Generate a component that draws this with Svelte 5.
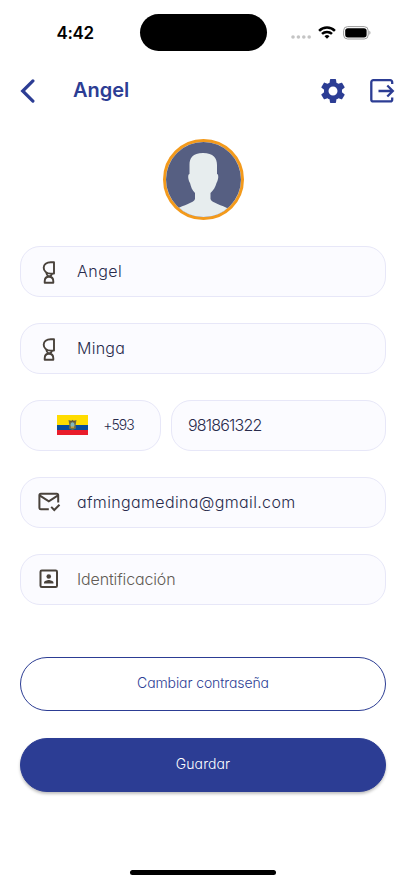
<script>
  let name = 'Angel';

  const people = [
    { value: 'Angel', width: 'first' },
    { value: 'Minga', width: 'last' }
  ];
</script>

<main class="screen">
  <div class="status-bar">
    <span class="time">4:42</span>
    <div class="island"></div>
    <div class="indicators">
      <svg width="20" height="4" viewBox="0 0 20 4" fill="#c4c4c4">
        <circle cx="2" cy="2" r="1.8" />
        <circle cx="7.4" cy="2" r="1.8" />
        <circle cx="12.8" cy="2" r="1.8" />
        <circle cx="18.2" cy="2" r="1.8" />
      </svg>
      <svg class="wifi" width="18" height="13" viewBox="0 0 18 13" fill="none" stroke="#000" stroke-width="2.5">
        <path d="M1.1 4.8a11.2 11.2 0 0 1 15.8 0" />
        <path d="M4 7.9a7.2 7.2 0 0 1 10 0" />
        <path d="M6.5 10.2a3.7 3.7 0 0 1 5 0L9 12.8z" fill="#000" stroke="none" />
      </svg>
      <svg class="battery" width="28" height="14" viewBox="0 0 28 14">
        <rect x=".6" y=".6" width="24.6" height="12.4" rx="4" fill="none" stroke="#9b9b9b" />
        <rect x="2.2" y="2.2" width="21.4" height="9.2" rx="2.6" />
        <path d="M26.4 4.8c1.4.6 1.4 3.4 0 4z" fill="#9b9b9b" />
      </svg>
    </div>
  </div>

  <header class="app-bar">
    <button class="icon-button" aria-label="Volver">
      <svg width="16" height="24" viewBox="0 0 16 24" fill="none" stroke="currentColor" stroke-width="3.2" stroke-linecap="round">
        <path d="M12.9 1.9 2.7 12l10.2 10.1" />
      </svg>
    </button>
    <h1>{name}</h1>
    <button class="icon-button" aria-label="Ajustes">
      <svg width="30" height="30" viewBox="0 0 24 24" fill="currentColor">
        <path d="M19.14 12.94c.04-.3.06-.61.06-.94 0-.32-.02-.64-.07-.94l2.03-1.58c.18-.14.23-.41.12-.61l-1.92-3.32c-.12-.22-.37-.29-.59-.22l-2.39.96c-.5-.38-1.03-.7-1.62-.94l-.36-2.54c-.04-.24-.24-.41-.48-.41h-3.84c-.24 0-.43.17-.47.41l-.36 2.54c-.59.24-1.13.57-1.62.94l-2.39-.96c-.22-.08-.47 0-.59.22L2.74 8.87c-.12.21-.08.47.12.61l2.03 1.58c-.05.3-.09.63-.09.94s.02.64.07.94l-2.03 1.58c-.18.14-.23.41-.12.61l1.92 3.32c.12.22.37.29.59.22l2.39-.96c.5.38 1.03.7 1.62.94l.36 2.54c.05.24.24.41.48.41h3.84c.24 0 .44-.17.47-.41l.36-2.54c.59-.24 1.13-.56 1.62-.94l2.39.96c.22.08.47 0 .59-.22l1.92-3.32c.12-.22.07-.47-.12-.61l-2.01-1.58zM12 15.6c-1.98 0-3.6-1.62-3.6-3.6s1.62-3.6 3.6-3.6 3.6 1.62 3.6 3.6-1.62 3.6-3.6 3.6z" />
      </svg>
    </button>
    <button class="icon-button exit" aria-label="Salir">
      <svg width="25" height="24" viewBox="0 0 25 24" fill="none" stroke="currentColor" stroke-width="2.3">
        <path d="M22.2 5V3.2a2 2 0 0 0-2-2H3.3a2 2 0 0 0-2 2v17.2a2 2 0 0 0 2 2h16.9a2 2 0 0 0 2-2v-2" />
        <path d="M8.5 12h14M17.3 6.5l5.5 5.5-5.5 5.5" />
      </svg>
    </button>
  </header>

  <div class="avatar">
    <svg width="75" height="75" viewBox="0 0 75 75">
      <rect width="75" height="75" fill="#565f82" />
      <path d="M23.5 23c0-7 3-12 13.5-12s14 5 14 12v9c2 0 1.5 6-.5 9-1 4-3 7-6 10v6c1 4 12 6 18 10v8H11v-8c6-4 17-6 18-10v-6c-3-3-4-6-5-10-2-3-2.5-9-.5-9z" fill="#e7edee" />
    </svg>
  </div>

  <form class="form">
    {#each people as person}
      <div class="field">
        <svg class="lead" width="26" height="26" viewBox="0 0 26 26" fill="none" stroke="#49423b" stroke-width="1.9" stroke-linejoin="round">
          <path d="M18 3.2h-3.2C10.5 3.2 7.7 5.5 7.7 8.700s2.700 5.900 7 5.900H18z" />
          <path d="M17.3 23.700H8.700v-1.500c0-2.700 1.600-4.500 4.200-4.500s4.400 1.800 4.400 4.500zM10.200 13.500c.2 2 1.200 3.200 2.700 4.200 1.900-.8 3-1.700 3.200-3.100" />
        </svg>
        <span class="value {person.width}">{person.value}</span>
      </div>
    {/each}

    <div class="phone">
      <div class="field country">
        <svg width="31" height="20" viewBox="0 0 31 20">
          <rect width="31" height="20" fill="#ffdc00" />
          <rect y="10" width="31" height="5" fill="#084b9b" />
          <rect y="15" width="31" height="5" fill="#e91c2b" />
          <path d="m11.5 5 3 .8 1-1 1 1 3-.8-.8 5 .3 3.500-3.500 1.500-3.500-1.500.3-3.500z" fill="#6f7048" />
          <ellipse cx="15.5" cy="10" rx="2" ry="2.7" fill="#80b7bf" />
          <path d="M14 11.5h3V13h-3z" fill="#c49b38" />
          <path d="m12.500 7 3-1 3 1" fill="none" stroke="#5a4937" stroke-width=".8" />
        </svg>
        <span class="prefix">+593</span>
      </div>
      <div class="field number"><span class="value digits">981861322</span></div>
    </div>

    <div class="field">
      <svg class="lead" width="26" height="26" viewBox="0 0 26 26" fill="none" stroke="#49423b" stroke-width="2">
        <path d="M12.8 20.300H4.900a1.500 1.500 0 0 1-1.500-1.500V6.300a1.500 1.500 0 0 1 1.500-1.500h15.800a1.500 1.500 0 0 1 1.500 1.500v7.200M3.600 6.300l9.200 6 9.200-6" />
        <path d="m15.200 17.900 3.100 3.100 5.200-5.200" />
      </svg>
      <span class="value email">afmingamedina@gmail.com</span>
    </div>
    <div class="field">
      <svg class="lead" width="26" height="26" viewBox="0 0 26 26" fill="#49423b">
        <rect x="4.5" y="4.5" width="16.5" height="16.5" rx="1.3" fill="none" stroke="#49423b" stroke-width="2" />
        <circle cx="12.75" cy="10.5" r="2.3" />
        <path d="M8 17.500v-.8c0-1.800 3.200-2.700 4.750-2.700s4.750.9 4.750 2.700v.8z" />
      </svg>
      <span class="value placeholder">Identificación</span>
    </div>

    <div class="actions">
      <button type="button" class="action outlined"><span>Cambiar contraseña</span></button>
      <button type="button" class="action filled"><span>Guardar</span></button>
    </div>
  </form>

  <div class="home-indicator"></div>
</main>

<style>
  :global(body) {
    margin: 0;
    background: #fff;
  }

  .screen {
    box-sizing: border-box;
    height: 883px;
    display: flex;
    flex-direction: column;
    overflow: hidden;
    background: #fff;
    font-family: Inter, 'Open Sans', sans-serif;
    /* single-storey a */
    font-feature-settings: 'cv11', 'ss03';
  }

  .screen * {
    box-sizing: border-box;
  }

  svg {
    display: block;
    flex: none;
  }

  .status-bar {
    height: 65px;
    flex: none;
    display: grid;
    grid-template-columns: 139.5px 127px 139.5px;
    align-items: center;
  }

  .time {
    padding-left: 56.5px;
    font-size: 17px;
    font-weight: 600;
    letter-spacing: -0.35px;
    line-height: 20px;
  }

  .island {
    height: 37px;
    border-radius: 19px;
    background: #000;
  }

  .indicators {
    display: flex;
    align-items: center;
    padding-left: 24.5px;
  }

  .indicators svg:first-child {
    margin-top: 9px;
  }

  .wifi {
    margin-left: 6.5px;
  }

  .battery {
    margin-left: 7px;
  }

  .app-bar {
    height: 51px;
    flex: none;
    display: flex;
    align-items: center;
    padding: 0 11.5px 0 20px;
    color: #2c3d94;
  }

  .icon-button {
    padding: 0;
    border: 0;
    background: none;
    color: inherit;
  }

  h1 {
    flex: 1;
    margin: 0 0 1px 37px;
    font-size: 20px;
    font-weight: 600;
    line-height: 24px;
  }

  .exit {
    margin-left: 21.5px;
  }

  .avatar {
    width: 81px;
    height: 81px;
    flex: none;
    margin: 23px auto 0;
    border: 3px solid #f39a1c;
    border-radius: 50%;
    overflow: hidden;
  }

  .form {
    display: flex;
    flex-direction: column;
    gap: 26.1px;
    padding: 26.3px 20.4px 0;
  }

  .field {
    height: 50.8px;
    display: flex;
    align-items: center;
    padding-left: 14.6px;
    border: 1px solid #e7e7f8;
    border-radius: 20px;
    background: #fbfbff;
    color: #292b4c;
  }

  .lead {
    width: 26px;
  }

  .value {
    margin-left: 15px;
    margin-bottom: 1px;
    font-size: 16px;
    font-weight: 300;
    line-height: 22px;
    white-space: nowrap;
  }

  .first {
    letter-spacing: 0.5px;
  }

  .last {
    letter-spacing: 0.25px;
  }

  .phone {
    display: grid;
    grid-template-columns: 141px 1fr;
    gap: 10px;
  }

  .country {
    padding-left: 35.4px;
  }

  .prefix {
    margin-left: 15.5px;
    margin-bottom: 1px;
    font-size: 14px;
    font-weight: 300;
    letter-spacing: -1px;
  }

  .number {
    padding-left: 0.6px;
  }

  .digits {
    letter-spacing: -0.8px;
  }

  .email {
    letter-spacing: 0.36px;
  }

  .placeholder {
    letter-spacing: -0.14px;
    color: #625b55;
  }

  .actions {
    display: grid;
    gap: 26.4px;
    padding-top: 26px;
  }

  .action {
    height: 54.4px;
    padding: 0 0 2px;
    border: 1px solid #2c3d94;
    border-radius: 28px;
    font: inherit;
    font-size: 14px;
    font-weight: 300;
    font-feature-settings: inherit;
  }

  .outlined {
    background: #fff;
    color: #2c3d94;
    letter-spacing: -0.1px;
  }

  .filled {
    background: #2c3d94;
    color: #fff;
    letter-spacing: 0.1px;
    box-shadow: 0 2px 3px rgba(0, 0, 0, 0.25);
  }

  .home-indicator {
    width: 146px;
    height: 5px;
    flex: none;
    margin: auto auto 8px;
    border-radius: 3px;
    background: #000;
  }
</style>
